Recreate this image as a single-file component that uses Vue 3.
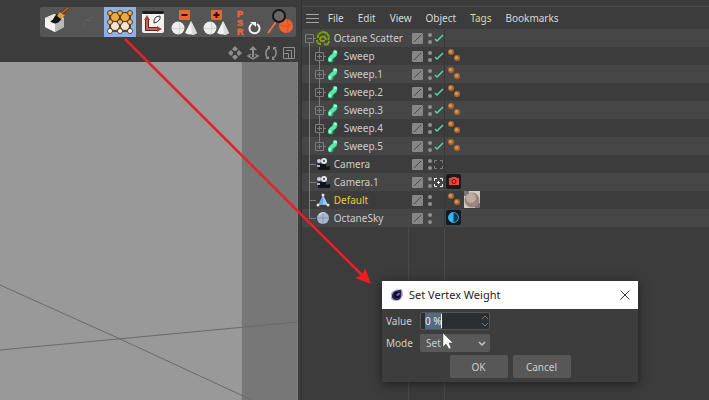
<script setup>
import { ref, onMounted } from 'vue'

const menus = ['File', 'Edit', 'View', 'Object', 'Tags', 'Bookmarks']

const tools = [
  { id: 'paint', label: 'Paint tool' },
  { id: 'empty', label: 'Unavailable tool' },
  { id: 'weight', label: 'Vertex weight', active: true },
  { id: 'axis', label: 'Axis' },
  { id: 'minus', label: 'Remove objects' },
  { id: 'plus', label: 'Add objects' },
  { id: 'psr', label: 'Reset PSR' },
  { id: 'find', label: 'Find object' },
]

const objects = [
  { name: 'Octane Scatter', icon: 'scatter', open: true, expander: true, check: true, tags: [] },
  ...['Sweep', 'Sweep.1', 'Sweep.2', 'Sweep.3', 'Sweep.4', 'Sweep.5'].map((name, i) => ({
    name, icon: 'sweep', child: true, expander: true, lastChild: i === 5, check: true, tags: ['balls'],
  })),
  { name: 'Camera', icon: 'camera', target: '#7f7f7f', tags: [] },
  { name: 'Camera.1', icon: 'camera', target: '#ffffff', tags: ['cam'] },
  { name: 'Default', icon: 'poly', selected: true, tags: ['balls', 'material'] },
  { name: 'OctaneSky', icon: 'sky', last: true, tags: ['env'] },
]

const weight = ref('0 %')
const mode = ref('Set')
const weightInput = ref(null)

onMounted(() => {
  weightInput.value.focus()
  weightInput.value.select()
})
</script>

<template>
  <div class="app">
    <section class="left">
      <header class="tool-area">
        <div class="toolbar">
          <button v-for="t in tools" :key="t.id" type="button" class="tool" :class="{ active: t.active }" :aria-label="t.label">
            <svg viewBox="0 0 32 30" width="32" height="30">
              <g v-if="t.id === 'paint'">
                <path d="M5 11 14 7 24 11 24 20 15 25 5 20Z" fill="#d6d6d4" />
                <path d="M5 11 15 15 15 25 5 20Z" fill="#f4f4f2" />
                <path d="M15 15 24 11 24 20 15 25Z" fill="#b9b9b7" />
                <path d="M5 11 14 7 24 11 15 15Z" fill="#e6e4df" />
                <path d="M10 14C14 14 13 10 17 7L22 11C19 17 14 18 10 14Z" fill="#191510" />
                <path d="M17 9 20 5 25 8 21 12Z" fill="#dba044" />
                <path d="M20 5 27 0 29 2 24 8Z" fill="#7d3a14" />
                <path d="M22 6 28 1" stroke="#c9853c" />
              </g>
              <g v-else-if="t.id === 'empty'" fill="none" stroke="#646464" stroke-width="1">
                <path d="M12 19C11 14 15 12 22 10M15 13 18 14" />
              </g>
              <g v-else-if="t.id === 'weight'" stroke="#54401f" stroke-width="1">
                <path d="M6 6H26V24H6ZM6 15H26M16 6V24" fill="none" stroke-width="2" />
                <g fill="#f2a63f">
                  <circle cx="11" cy="10" r="4.500" /><circle cx="21" cy="10" r="4.500" />
                  <circle cx="6" cy="6" r="2.500" /><circle cx="16" cy="6" r="2.500" /><circle cx="26" cy="6" r="2.500" />
                </g>
                <g fill="#f8e2d4"><circle cx="11" cy="19" r="4.500" /><circle cx="21" cy="19" r="4.500" /></g>
                <g fill="#f3bd7a"><circle cx="6" cy="15" r="2.500" /><circle cx="16" cy="15" r="2.500" /><circle cx="26" cy="15" r="2.500" /></g>
                <g fill="#ffffff"><circle cx="6" cy="24" r="2.500" /><circle cx="16" cy="24" r="2.500" /><circle cx="26" cy="24" r="2.500" /></g>
              </g>
              <g v-else-if="t.id === 'axis'">
                <rect x="6" y="4" width="22" height="22" rx="2" fill="#f1f1ef" />
                <rect x="6" y="4" width="22" height="3" rx="1" fill="#1d1d1d" />
                <path d="M11 12V22H22" fill="none" stroke="#6d2421" stroke-width="4" />
                <path d="M11 12V22H22" fill="none" stroke="#c0655a" stroke-width="2" />
                <path d="M8 13 11 8 14 13ZM21 19 26 22 21 25Z" fill="#a5453d" />
                <path d="M18 13 20 10 24 9 24 12 21 15 18 16Z" fill="#ffffff" stroke="#333" />
              </g>
              <g v-else-if="t.id === 'minus' || t.id === 'plus'">
                <rect x="11" y="3" width="11" height="10" rx="1" fill="#ef6437" />
                <path d="M13.500 8H19.500" stroke="#2b130b" stroke-width="2" />
                <path v-if="t.id === 'plus'" d="M16.500 5V11" stroke="#2b130b" stroke-width="2" />
                <circle cx="10" cy="21" r="6.500" fill="#eeeeec" />
                <path d="M4 21Q10 23 16 21M11 15Q13 21 11 27" fill="none" stroke="#cfcfcd" />
                <path d="M23 14 29 26Q23 29 17 26Z" fill="#f1f1ef" />
                <path d="M23 14 29 26Q27 28 24 28Z" fill="#dadad8" />
              </g>
              <g v-else-if="t.id === 'psr'">
                <g class="psr-text" fill="#f0643a" stroke="#f0643a" stroke-width=".5">
                  <text x="5" y="10">P</text><text x="5" y="19">S</text><text x="5" y="28">R</text>
                </g>
                <path d="M20 17A5 5 0 1 0 25 17" fill="none" stroke="#f2f2f2" stroke-width="2" />
                <path d="M18 15H24V20Z" fill="#f2f2f2" />
              </g>
              <g v-else>
                <path d="M4 26 12 15" stroke="#ef7040" stroke-width="2" />
                <circle cx="22" cy="19" r="7" fill="#f0622f" />
                <path d="M16 18Q22 21 28 17M23 12Q26 18 23 26" fill="none" stroke="#d24f23" />
                <circle cx="15" cy="9" r="6" fill="#6b6766" stroke="#171717" stroke-width="2" />
              </g>
            </svg>
          </button>
        </div>
        <nav class="view-nav" aria-label="View controls">
          <button type="button" aria-label="Pan">
            <svg viewBox="0 0 14 14" width="14" height="14" fill="#8e8e8e"><path d="M7 0 10 3 8 5H6L4 3ZM7 14 4 11 6 9H8L10 11ZM0 7 3 4 5 6V8L3 10ZM14 7 11 10 9 8V6L11 4Z" /></svg>
          </button>
          <button type="button" aria-label="Dolly">
            <svg viewBox="0 0 14 14" width="14" height="14"><path d="M7 0 11 4H8V11H6V4H3Z" fill="#8e8e8e" /><path d="M5 8 2 10 7 13 12 10 9 8" fill="none" stroke="#8e8e8e" stroke-width="1.500" /></svg>
          </button>
          <button type="button" aria-label="Orbit">
            <svg viewBox="0 0 14 14" width="14" height="14"><path d="M5 2C1 4 1 10 4 12M9 12C13 10 13 4 10 2" fill="none" stroke="#8e8e8e" stroke-width="1.500" /><path d="M3 0H6V4ZM11 14H8V10ZM1 13H5V10ZM13 1H9V4Z" fill="#8e8e8e" /></svg>
          </button>
          <button type="button" aria-label="Toggle view">
            <svg viewBox="0 0 14 14" width="14" height="14" fill="none" stroke="#8e8e8e"><path d="M1.500 1.500H12.500V12.500H1.500ZM1.500 7.500H6.500V12.500M4 4.500H9.500V12" /></svg>
          </button>
        </nav>
      </header>
      <div class="viewport">
        <svg class="floor" viewBox="0 0 298 338" preserveAspectRatio="none">
          <rect x="242" y="0" width="56" height="338" fill="#777777" />
          <path d="M0 223 118 276 252 338M0 288 118 277 298 260" fill="none" stroke="#696969" />
        </svg>
      </div>
    </section>

    <section class="manager">
      <nav class="menu">
        <button type="button" class="burger" aria-label="Panel menu">
          <svg viewBox="0 0 13 11" width="13" height="11" stroke="#a4a4a4"><path d="M0 1.500H13M0 5.500H13M0 9.500H13" /></svg>
        </button>
        <button v-for="m in menus" :key="m" type="button" class="menu-item" :class="{ hot: m === 'Tags' }">{{ m }}</button>
      </nav>

      <ul class="tree">
        <li v-for="o in objects" :key="o.name" class="row" :class="{ selected: o.selected }">
          <div class="name-cell">
            <svg v-if="o.child" class="guide" viewBox="0 0 10 18" width="10" height="18"><path d="M7.500 0V18" stroke="#7c7c7c" /></svg>
            <component :is="o.expander ? 'button' : 'span'" class="expander" :type="o.expander ? 'button' : null" :aria-label="o.expander ? 'Toggle ' + o.name : null">
              <svg viewBox="0 0 14 18" width="14" height="18" fill="none" stroke="#7c7c7c">
                <path v-if="o.open" d="M7.500 13V18M11 9.500H14" />
                <path v-else-if="o.expander" :d="o.lastChild ? 'M7.500 0V6M11 9.500H14' : 'M7.500 0V6M7.500 13V18M11 9.500H14'" />
                <path v-else :d="o.last ? 'M7.500 0V9.500H14' : 'M7.500 0V18M7.500 9.500H14'" />
                <path v-if="o.expander" d="M3.500 5.500H11.500V13.500H3.500Z" />
                <path v-if="o.expander" :d="o.open ? 'M5 9.500H10' : 'M5 9.500H10M7.500 7V12'" />
              </svg>
            </component>
            <svg class="object-icon" viewBox="0 0 14 18" width="14" height="18">
              <g v-if="o.icon === 'scatter'" fill="none" stroke="#7fa30f" stroke-width="2">
                <path d="M2 9C1 5 5 3 8 3C12 4 14 8 12 11" />
                <path d="M1 11C1 14 3 15 5 15M8 15C11 16 13 15 13 12" />
                <path d="M4 11C4 7 9 6 10 11M4 12H9" stroke="#8a9a22" />
                <path d="M1 5 4 6M12 3 9 6M0 13H3M6 1V4M12 8H14" stroke="#547a12" stroke-width="1" />
              </g>
              <g v-else-if="o.icon === 'sweep'">
                <path d="M5 13V11C6 9 9 9 9 7V6" fill="none" stroke="#1f9f70" stroke-width="5" stroke-linecap="round" />
                <path d="M4 13V12C5 9 9 9 9 6V5" fill="none" stroke="#58e8ad" stroke-width="4" stroke-linecap="round" />
                <path d="M9 5H10M4 12V13" stroke="#b0f8d9" stroke-width="2" stroke-linecap="round" />
              </g>
              <g v-else-if="o.icon === 'camera'">
                <rect x="2" y="9" width="8" height="6" rx="1" fill="#10131a" />
                <path d="M9 12 14 11V15L9 15Z" fill="#10131a" />
                <circle cx="3" cy="6" r="2" fill="#cbd3df" /><circle cx="8" cy="6" r="3" fill="#dfe5ed" />
                <circle cx="8" cy="6" r="1" fill="#333944" /><path d="M1 11H4" stroke="#aab5c5" stroke-width="2" />
              </g>
              <g v-else-if="o.icon === 'poly'">
                <path d="M7 4 12 14H2Z" fill="#6fa9ec" />
                <path d="M7 4 12 14 7 13Z" fill="#9bc6f8" />
                <circle cx="7" cy="4" r="1.500" fill="#e8e4c0" /><circle cx="2" cy="14" r="1.500" fill="#e8e4c0" /><circle cx="12" cy="14" r="1.500" fill="#e8e4c0" />
              </g>
              <g v-else>
                <circle cx="7" cy="9" r="6" fill="#a9b9d2" />
                <path d="M1 9H13M7 3V15" fill="none" stroke="#8394b0" />
                <path d="M3 6Q5 3 9 4" fill="none" stroke="#d5e1f2" />
              </g>
            </svg>
            <span class="name">{{ o.name }}</span>
          </div>
          <div class="state-cell">
            <svg viewBox="0 0 36 18" width="36" height="18">
              <rect x="3" y="4" width="11" height="11" rx="1" fill="#868686" />
              <path d="M5 13 12 6" stroke="#4a4a4a" />
              <circle cx="21" cy="6" r="2" fill="#8f8f8f" /><circle cx="21" cy="13" r="2" fill="#8f8f8f" />
              <path v-if="o.check" d="M26 10 28 12 34 6" fill="none" stroke="#58d6a5" stroke-width="1.500" />
              <g v-if="o.target" fill="none" :stroke="o.target">
                <path d="M25.500 8V5.500H28M31 5.500H33.500V8M33.500 11V13.500H31M28 13.500H25.500V11" />
                <path v-if="o.target === '#ffffff'" d="M28 9.500H31M29.500 8V11" />
              </g>
            </svg>
          </div>
          <div class="tag-cell">
            <svg v-for="t in o.tags" :key="t" viewBox="0 0 18 18" width="18" height="18">
              <g v-if="t === 'balls'">
                <circle cx="6" cy="5" r="3" fill="#b06a2e" /><circle cx="12" cy="11" r="3" fill="#b06a2e" />
                <circle cx="5.500" cy="4.500" r="1.500" fill="#d99a5c" /><circle cx="11.500" cy="10.500" r="1.500" fill="#d99a5c" />
              </g>
              <g v-else-if="t === 'cam'">
                <rect x="1" y="1" width="15" height="15" rx="2" fill="#20191b" />
                <path d="M4 5H6L7 4H11L12 5H14V12H4Z" fill="#e8483c" />
                <circle cx="9" cy="8.500" r="2" fill="none" stroke="#541a1a" />
              </g>
              <g v-else-if="t === 'material'">
                <rect x="1" y="0" width="16" height="17" fill="#d0ccc5" />
                <path d="M1 0H6V5H1ZM12 12H17V17H12Z" fill="#777" />
                <circle cx="9" cy="9" r="7.500" fill="#9d877c" /><circle cx="8" cy="7" r="5" fill="#c0aba0" />
              </g>
              <g v-else>
                <rect x="1" y="1" width="15" height="15" rx="2" fill="#101a22" />
                <circle cx="8.500" cy="8.500" r="5" fill="#14384d" stroke="#29a9e5" />
                <path d="M8.500 3.500A5 5 0 0 0 8.500 13.500Z" fill="#35b6f0" />
              </g>
            </svg>
          </div>
        </li>
        <li class="row filler" aria-hidden="true">
          <div></div><div class="state-cell"></div><div class="tag-cell"></div>
        </li>
      </ul>
    </section>

    <form class="dialog" @submit.prevent>
      <header class="dialog-title">
        <svg viewBox="0 0 14 14" width="14" height="14">
          <path d="M1 8C0 4 4 1 12 1C14 6 13 12 7 13C3 13 0 12 1 8Z" fill="#b3b1cf" />
          <path d="M2 8C2 4 6 2 11 2C12 7 11 12 7 12C4 12 2 11 2 8Z" fill="#25224f" />
          <circle cx="7" cy="7" r="3" fill="#0d0d28" />
          <path d="M6 7Q8 4 10 5Q10 8 7 8Z" fill="#6266a8" />
        </svg>
        <h1>Set Vertex Weight</h1>
        <button type="button" class="close" aria-label="Close">
          <svg viewBox="0 0 10 10" width="10" height="10"><path d="M.5 .5 9.500 9.500M9.500 .5 .5 9.500" stroke="#333" /></svg>
        </button>
      </header>
      <div class="fields">
        <label for="weight">Value</label>
        <div class="control number">
          <input id="weight" ref="weightInput" v-model="weight" type="text" />
          <span class="caret"></span>
          <svg class="spin" viewBox="0 0 8 12" width="8" height="12" fill="none" stroke="#787878"><path d="M1 4 4 1 7 4M1 8 4 11 7 8" /></svg>
        </div>
        <label for="mode">Mode</label>
        <div class="control">
          <select id="mode" v-model="mode"><option>Set</option></select>
          <svg class="chevron" viewBox="0 0 8 6" width="8" height="6" fill="none" stroke="#c6c6c6" stroke-width="1.500"><path d="M1 1 4 4 7 1" /></svg>
        </div>
      </div>
      <footer class="actions">
        <button type="submit">OK</button>
        <button type="button">Cancel</button>
      </footer>
      <svg class="cursor" viewBox="0 0 12 18" width="12" height="18"><path d="M1 1V15L4 12L7 17L9 16L7 11H11Z" fill="#fff" stroke="#444" stroke-width=".5" /></svg>
    </form>

    <svg class="arrow" viewBox="0 0 250 250" width="250" height="250">
      <path d="M3 3 241 240" stroke="#e4222a" stroke-width="2.500" />
      <path d="M249 248 233 242 240 239 243 232Z" fill="#f01c20" />
    </svg>
  </div>
</template>

<style>
body {
  background: #3d3d3d;
}
</style>

<style scoped>
.app {
  position: relative;
  display: grid;
  grid-template-columns: 42% minmax(0, 1fr);
  min-height: 100vh;
  overflow: hidden;
  background: #3c3c3c;
  color: #cccccc;
  font: 10px/18px "Noto Sans", "Open Sans", sans-serif;
}
button,
input,
select {
  margin: 0;
  padding: 0;
  border: 0;
  background: none;
  color: inherit;
  font: inherit;
}
svg {
  display: block;
  flex: none;
}
.left {
  display: flex;
  flex-direction: column;
}
.tool-area {
  display: flex;
  flex-direction: column;
  align-items: flex-end;
  gap: 8px;
  padding: 7px 2px 2px;
}
.toolbar {
  display: flex;
  border-radius: 2px;
  background: #555555;
}
.tool {
  width: 32px;
  height: 30px;
}
.tool.active {
  background: #8fb2e6;
}
.psr-text {
  font: bold 9px "Liberation Sans", sans-serif;
}
.view-nav {
  display: flex;
  gap: 4px;
}
.view-nav button {
  height: 15px;
}
.viewport {
  flex: 1;
  display: grid;
  min-height: 0;
  background: #999999;
}
.floor {
  width: 100%;
  height: 100%;
}
.manager {
  display: flex;
  flex-direction: column;
  margin-left: 3px;
  padding-top: 6px;
  border-left: 1px solid #323232;
}
.menu {
  display: flex;
  align-items: center;
  gap: 14px;
  height: 22px;
  padding-left: 4px;
  border-top: 1px solid #4d4d4d;
}
.burger {
  margin-right: -5px;
}
.menu-item {
  color: #d8d8d8;
}
.menu-item.hot {
  color: #d3d99a;
}
.tree {
  flex: 1;
  display: flex;
  flex-direction: column;
  margin: 0;
  padding: 0;
  list-style: none;
}
.row {
  display: grid;
  grid-template-columns: 107px 36px minmax(0, 1fr);
  min-height: 18px;
}
.row:nth-child(odd) {
  background: #464646;
}
.filler.row {
  flex: 1;
  background: #3c3c3c;
}
.name-cell,
.tag-cell {
  display: flex;
}
.name {
  margin-left: 4px;
  white-space: nowrap;
}
.selected .name {
  color: #f4c92c;
}
.tag-cell {
  box-shadow: -1px 0 #373737;
}
.filler .state-cell,
.filler .tag-cell {
  box-shadow: -1px 0 #484848;
}
.dialog {
  position: absolute;
  top: 281px;
  right: 71px;
  width: 256px;
  padding-bottom: 4px;
  background: #3d3d3d;
  box-shadow: 0 2px 10px rgba(0, 0, 0, 0.5);
}
.dialog-title {
  display: flex;
  align-items: center;
  gap: 5px;
  height: 28px;
  padding: 0 8px;
  background: #ffffff;
  color: #222222;
}
.dialog-title h1 {
  flex: 1;
  margin: 0;
  font-size: 11px;
  font-weight: 400;
}
.fields {
  display: grid;
  grid-template-columns: 34px 70px;
  align-items: center;
  gap: 4px 0;
  padding: 3px 4px;
}
.control {
  position: relative;
}
.control input,
.control select {
  display: block;
  box-sizing: border-box;
  width: 100%;
  height: 18px;
  border-radius: 2px;
  outline: none;
}
.control input {
  padding-left: 4px;
  border: 1px solid #555555;
  background: #2c2f32;
  color: #e6e6e6;
}
.control input::selection {
  background: #536a83;
  color: #e6e6e6;
}
.control select {
  appearance: none;
  padding-left: 6px;
  background: #585858;
}
.caret {
  position: absolute;
  top: 2px;
  left: 21px;
  width: 1px;
  height: 14px;
  background: #ffffff;
}
.spin {
  position: absolute;
  top: 3px;
  right: 1px;
}
.chevron {
  position: absolute;
  top: 7px;
  right: 4px;
}
.actions {
  display: flex;
  justify-content: center;
  gap: 5px;
}
.actions button {
  width: 58px;
  height: 23px;
  border-radius: 2px;
  background: #575757;
}
.cursor {
  position: absolute;
  top: 51px;
  left: 60px;
}
.arrow {
  position: absolute;
  top: 36px;
  left: 122px;
  pointer-events: none;
}
</style>
